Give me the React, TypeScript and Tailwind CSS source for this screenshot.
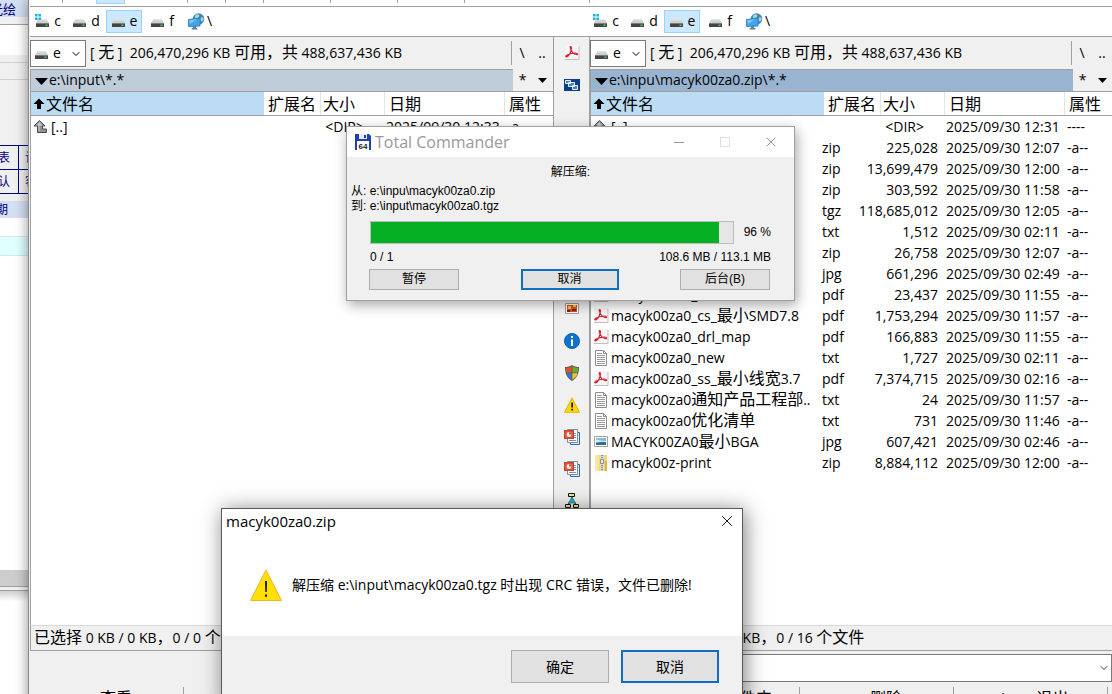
import { ReactNode } from "react";
import { ChevronDown, X } from "lucide-react";

type IconName =
  | "pdf" | "txt" | "jpg" | "zip" | "up" | "windows" | "picture"
  | "info" | "shield" | "warning" | "ppt" | "network";

interface FileRow {
  icon: IconName;
  name: string;
  ext: string;
  size: string;
  date: string;
  attr: string;
}

const INPUT_FILES: FileRow[] = [
  { icon: "up", name: "[..]", ext: "", size: "<DIR>", date: "2025/09/30 12:33", attr: "-a--" },
];

const ZIP_FILES: FileRow[] = [
  { icon: "up", name: "[..]", ext: "", size: "<DIR>", date: "2025/09/30 12:31", attr: "----" },
  { icon: "zip", name: "", ext: "zip", size: "225,028", date: "2025/09/30 12:07", attr: "-a--" },
  { icon: "zip", name: "", ext: "zip", size: "13,699,479", date: "2025/09/30 12:00", attr: "-a--" },
  { icon: "zip", name: "", ext: "zip", size: "303,592", date: "2025/09/30 11:58", attr: "-a--" },
  { icon: "zip", name: "", ext: "tgz", size: "118,685,012", date: "2025/09/30 12:05", attr: "-a--" },
  { icon: "txt", name: "", ext: "txt", size: "1,512", date: "2025/09/30 02:11", attr: "-a--" },
  { icon: "zip", name: "", ext: "zip", size: "26,758", date: "2025/09/30 12:07", attr: "-a--" },
  { icon: "jpg", name: "", ext: "jpg", size: "661,296", date: "2025/09/30 02:49", attr: "-a--" },
  { icon: "pdf", name: "macyk00za0_", ext: "pdf", size: "23,437", date: "2025/09/30 11:55", attr: "-a--" },
  { icon: "pdf", name: "macyk00za0_cs_最小SMD7.8", ext: "pdf", size: "1,753,294", date: "2025/09/30 11:57", attr: "-a--" },
  { icon: "pdf", name: "macyk00za0_drl_map", ext: "pdf", size: "166,883", date: "2025/09/30 11:55", attr: "-a--" },
  { icon: "txt", name: "macyk00za0_new", ext: "txt", size: "1,727", date: "2025/09/30 02:11", attr: "-a--" },
  { icon: "pdf", name: "macyk00za0_ss_最小线宽3.7", ext: "pdf", size: "7,374,715", date: "2025/09/30 02:16", attr: "-a--" },
  { icon: "txt", name: "macyk00za0通知产品工程部..", ext: "txt", size: "24", date: "2025/09/30 11:57", attr: "-a--" },
  { icon: "txt", name: "macyk00za0优化清单", ext: "txt", size: "731", date: "2025/09/30 11:46", attr: "-a--" },
  { icon: "jpg", name: "MACYK00ZA0最小BGA", ext: "jpg", size: "607,421", date: "2025/09/30 02:46", attr: "-a--" },
  { icon: "zip", name: "macyk00z-print", ext: "zip", size: "8,884,112", date: "2025/09/30 12:00", attr: "-a--" },
];

// null leaves an empty slot between two groups
const BUTTON_BAR: (IconName | null)[] = [
  "pdf", "windows", null, "zip", "jpg", "info", "txt", "zip",
  "picture", "info", "shield", "warning", "ppt", "ppt", "network",
];

const TOOLBAR_GROUPS = [
  "w-[33px]", "w-[125px]", "w-[38px]", "w-[38px]", "w-[67px]", "w-[67px]", "w-[67px]", "w-[125px]",
];

const FUNCTION_KEYS = [
  "F3 查看", "F4 编辑", "F5 复制", "F6 移动", "F7 新建文件夹", "F8 删除", "Alt+F4 退出",
];

// Chinese runs are set a step larger than the Latin text around them
function Mixed({ text }: { text: string }) {
  const parts = text.split(/([\u3000-\u9fff\uff00-\uffef]+)/);
  return (
    <>
      {parts.map((part, i) =>
        i % 2 ? <span key={i} className="text-[16px] leading-none">{part}</span> : part
      )}
    </>
  );
}

function DriveIcon({ system = false }: { system?: boolean }) {
  return (
    <svg width="15" height="14" viewBox="0 0 15 14" className="shrink-0">
      <path d="M3.500 5h8L14 9H1z" fill="#cfcfcf" />
      <path d="M3.500 5h8l.8 1.500H2.700z" fill="#e4e4e4" />
      <path d="M1 9h13v4H1z" fill="#454545" />
      <path d="M1 9h13v1H1z" fill="#7c7c7c" />
      <path d="M10.500 10.500h2v1.500h-2z" fill="#3fd65a" />
      {system && (
        <path d="M0 0h2.600v2.600H0zM3.400 0H6v2.600H3.400zM0 3.400h2.600V6H0zM3.400 3.400H6V6H3.400z" fill="#19b5e6" />
      )}
    </svg>
  );
}

function NetworkDriveIcon() {
  return (
    <svg width="17" height="17" viewBox="0 0 17 17" className="shrink-0">
      <circle cx="10.500" cy="6" r="5.800" fill="#4587a8" />
      <path d="M7 3c1-2 3-2 4-1s-.5 2-1 3-2 1-3 0zM12.500 5c1-1 2.500-1 3 0s-.5 3-1.500 3.500S12 6 12.500 5z" fill="#a4d3e6" />
      <path d="M.5 6.500L12 5v8L.5 13.500z" fill="#3fa6ec" stroke="#2b77ad" strokeWidth=".8" />
      <path d="M1.300 7.200L9 6.200 2 11z" fill="#7cc8f8" />
      <path d="M5 13.300l3-.2v1.700l1.500.7v1h-6v-1L5 15z" fill="#56829e" />
    </svg>
  );
}

function Icon({ name }: { name: IconName }) {
  switch (name) {
    case "pdf":
      return (
        <svg width="16" height="16" viewBox="0 0 16 16" className="shrink-0">
          <path d="M1 0h14v15H1z" fill="#f7f5f5" />
          <path d="M1 14.500h14V1" stroke="#c4bfbf" fill="none" />
          <path d="M6.600 1.500c1.400 0 .8 3.200-.4 6.200C5 10.500 3 12.300 1.900 11.800 1.200 10.800 4.500 9.100 7.500 8.500c3-.6 6-.3 6.200.6.100 1-3 .4-4.900-1.500C7 5.700 5.500 1.500 6.600 1.500z" fill="none" stroke="#d3222a" strokeWidth="1.200" />
        </svg>
      );
    case "txt":
      return (
        <svg width="16" height="16" viewBox="0 0 16 16" className="shrink-0">
          <path d="M2.500.5h8l3 3v12h-11z" fill="#fff" stroke="#8c8c8c" />
          <path d="M10.500.5v3h3" fill="none" stroke="#8c8c8c" />
          <path d="M4 3.500h5M4 5.500h8M4 7.500h8M4 9.500h8M4 11.500h8M4 13.500h8" stroke="#9a9a9a" />
        </svg>
      );
    case "jpg":
      return (
        <svg width="16" height="16" viewBox="0 0 16 16" className="shrink-0">
          <path d="M1.500 2.500h13v10h-13z" fill="#fff" stroke="#a0a0a0" />
          <path d="M3 4h10v7H3z" fill="#7fb9e0" />
          <path d="M3 8.500c3 1 4-1.500 10-1V11H3z" fill="#2f6e86" />
          <path d="M3 5.500c3 0 5 2 10 1.500v1H3z" fill="#d3ebf7" />
        </svg>
      );
    case "zip":
      return (
        <svg width="16" height="16" viewBox="0 0 16 16" className="shrink-0">
          <path d="M2 0h12v16H2z" fill="#f3d676" />
          <path d="M2 0h4v16H2z" fill="#fae79f" />
          <path d="M12 6h2v10h-2z" fill="#dfb443" />
          <path d="M7 0h4v15H7z" fill="#deddd2" />
          <path d="M9 0v15" stroke="#8a8a80" strokeWidth="2" strokeDasharray="1 1" />
          <path d="M7.500 4.500h3v4h-3z" fill="#eee" stroke="#8a8a8a" />
        </svg>
      );
    case "up":
      return (
        <svg width="16" height="16" viewBox="0 0 16 16" className="shrink-0">
          <path d="M6.500 1.500L12 7H9.500v3h4v3.500H4.500V7H1z" fill="#929292" stroke="#4c4c4c" />
          <path d="M6.500 3L9 6.500H6.500V12H5.500V6.500H3.500z" fill="#cacaca" />
        </svg>
      );
    case "windows":
      return (
        <svg width="16" height="16" viewBox="0 0 16 16" className="shrink-0">
          <path d="M0 2h16v12H0z" fill="#0b3f8c" />
          <path d="M1.500 3.500h5v3h-5zM4.500 5.500h6v4h-6zM8.500 8.500h5v4h-5z" fill="#4a80bd" stroke="#e6f1fb" />
        </svg>
      );
    case "picture":
      return (
        <svg width="16" height="16" viewBox="0 0 16 16" className="shrink-0">
          <path d="M1.500 2.500h13v10h-13z" fill="#fff" stroke="#a0a0a0" />
          <path d="M3 4h10v7H3z" fill="#d9531e" />
          <path d="M4 5h3v3H4zM9 4h3v2H9z" fill="#f9c440" />
          <path d="M3 9h3v2H3zM8 8h4v2H8z" fill="#8c1d10" />
        </svg>
      );
    case "info":
      return (
        <svg width="16" height="16" viewBox="0 0 16 16" className="shrink-0">
          <circle cx="8" cy="8" r="7.500" fill="#0b74d1" stroke="#0a5ca8" />
          <path d="M7 3h2v2H7zM7 6.500h2V13H7z" fill="#fff" />
        </svg>
      );
    case "shield":
      return (
        <svg width="16" height="16" viewBox="0 0 16 16" className="shrink-0">
          <path d="M8 0c2 1.500 4.500 2 7 2 0 7-2 11-7 14C3 13 1 9 1 2c2.500 0 5-.5 7-2z" fill="#5c5c52" />
          <path d="M7.600 1.500V7.500H2.300C2 6 2 4.500 2 3c2.200-.2 4-.6 5.600-1.500z" fill="#e0532a" />
          <path d="M8.400 1.500V7.500h5.300c.3-1.500.3-3 .3-4.500-2.200-.2-4-.6-5.600-1.500z" fill="#6bab2c" />
          <path d="M7.600 8.300V14.700C4.800 13 3.100 11 2.500 8.300z" fill="#2f76cf" />
          <path d="M8.400 8.300V14.700C11.200 13 12.900 11 13.500 8.300z" fill="#f7c22d" />
        </svg>
      );
    case "warning":
      return (
        <svg width="16" height="16" viewBox="0 0 16 16" className="shrink-0">
          <path d="M8 .8l7.500 14.500H.5z" fill="#ffd400" stroke="#e6b800" />
          <path d="M7.200 5.500h1.800v5H7.200zM7.200 11.700h1.800v1.800H7.200z" fill="#222" />
        </svg>
      );
    case "ppt":
      return (
        <svg width="16" height="16" viewBox="0 0 16 16" className="shrink-0">
          <path d="M6.500 3.500h9v12h-9z" fill="#dce6f6" stroke="#3f67ab" />
          <path d="M3.500.5h10v13h-10z" fill="#fff" stroke="#7390bd" />
          <path d="M5 11.500h7M10 4.500h2M10 6.500h2M10 8.500h2" stroke="#7390bd" />
          <path d="M0 1h10v9H0z" fill="#c9432b" />
          <path d="M1.500 2.500h7v6h-7z" fill="#e2684f" />
          <circle cx="5" cy="5.500" r="2.300" fill="#fff" />
          <path d="M5 5.500V3.200a2.300 2.300 0 0 1 2.300 2.300z" fill="#c9432b" />
        </svg>
      );
    case "network":
      return (
        <svg width="16" height="16" viewBox="0 0 16 16" className="shrink-0">
          <path d="M8 4v4L3 12M8 8l5 4" stroke="#111" fill="none" />
          <path d="M4.500.5h6v3h-6zM1.500 11.500h5v3h-5zM9.500 11.500h5v3h-5z" fill="#efe98b" stroke="#111" />
          <path d="M8 4l3.500 6h-7z" fill="#1fb8c4" stroke="#145f66" strokeWidth=".6" />
        </svg>
      );
  }
}

function DriveBar({ className }: { className: string }) {
  return (
    <div className={`flex h-[30px] items-center gap-0.5 border-b border-[#a0a0a0] bg-white pb-px ${className}`}>
      {["c", "d", "e", "f"].map((drive) => (
        <button
          key={drive}
          className={`flex h-[23px] w-9 items-center justify-center gap-1 border text-[14px] ${
            drive === "e" ? "border-[#99d1ff] bg-[#cce8ff]" : "border-transparent"
          }`}
        >
          <DriveIcon system={drive === "c"} />
          {drive}
        </button>
      ))}
      <button className="flex h-[23px] w-9 items-center justify-center gap-0.5 text-[14px]">
        <NetworkDriveIcon />
        <span>\</span>
      </button>
    </div>
  );
}

interface PanelProps {
  id: string;
  path: string;
  active?: boolean;
  files: FileRow[];
  status: string;
}

function Panel({ id, path, active, files, status }: PanelProps) {
  return (
    <section className="flex min-w-0 flex-col border-r border-[#a0a0a0]">
      <div className="flex h-8 items-center bg-[#f0f0f0]">
        <div className="relative">
          <label htmlFor={id} className="absolute left-1 top-1.5"><DriveIcon /></label>
          <select id={id} className="h-[27px] w-14 appearance-none border border-[#7a7a7a] bg-white pl-[22px] text-[14px]">
            <option>e</option>
          </select>
          <ChevronDown className="pointer-events-none absolute right-1 top-2 size-3" strokeWidth={2} />
        </div>
        <span className="flex-1 whitespace-pre pl-1">
          <Mixed text={"[ 无 ]  206,470,296 KB 可用，共 488,637,436 KB"} />
        </span>
        <div className="flex h-6 w-[42px] items-center border-l border-[#a0a0a0]">
          <button className="w-5">\</button>
          <button className="w-5">..</button>
        </div>
      </div>

      <div className="flex h-[22px] bg-[#f0f0f0]">
        <div className={`flex min-w-0 flex-1 items-start border-l border-t border-[#a0a0a0] pl-1 ${active ? "bg-[#99b4d1]" : "bg-[#bfcddb]"}`}>
          <svg width="13" height="7" viewBox="0 0 13 7" className="mr-px mt-2 shrink-0">
            <path d="M0 0h13L6.500 7z" />
          </svg>
          <span>{path}</span>
        </div>
        <div className="flex w-10 items-center justify-center gap-3">
          <button className="leading-none">*</button>
          <button aria-label="历史">
            <svg width="9" height="5" viewBox="0 0 9 5"><path d="M0 0h9L4.500 5z" /></svg>
          </button>
        </div>
      </div>

      <div className="flex h-[25px] border-y border-l border-[#a0a0a0] bg-white text-[16px]">
        <button className="flex min-w-0 flex-1 items-center gap-px bg-[#bcdcf4] pl-0.5">
          <svg width="12" height="12" viewBox="0 0 12 12">
            <path d="M6 .5l5.500 5.500H8v5H4V6H.5z" />
          </svg>
          文件名
        </button>
        <button className="w-[57px] border-r border-[#e5e5e5] text-center">扩展名</button>
        <button className="w-16 border-r border-[#e5e5e5] pl-0.5 text-left">大小</button>
        <button className="w-[120px] border-r border-[#e5e5e5] pl-1 text-left">日期</button>
        <button className="w-12 pl-1 text-left">属性</button>
      </div>

      <div className="min-h-0 flex-1 overflow-hidden border-l border-[#a0a0a0] bg-white">
        <table className="w-full table-fixed border-collapse">
          <colgroup>
            <col />
            <col className="w-8" />
            <col className="w-[85px]" />
            <col className="w-[127px]" />
            <col className="w-12" />
          </colgroup>
          <tbody>
            {files.map((file, i) => (
              <tr key={i} className="h-[21px]">
                <td className="p-0">
                  <div className="flex h-[21px] items-center gap-0.5 whitespace-nowrap pl-0.5">
                    <Icon name={file.icon} />
                    <span><Mixed text={file.name} /></span>
                  </div>
                </td>
                <td className="p-0 pl-px">{file.ext}</td>
                <td className={`p-0 text-right ${file.size === "<DIR>" ? "pr-3.5" : ""}`}>{file.size}</td>
                <td className="whitespace-nowrap p-0 pl-2">{file.date}</td>
                <td className="p-0 pl-0.5">{file.attr}</td>
              </tr>
            ))}
          </tbody>
        </table>
      </div>

      <div className="flex h-[26px] shrink-0 items-center overflow-hidden whitespace-nowrap border-y border-l border-b-[#a0a0a0] border-l-[#a0a0a0] border-t-[#d9d9d9] bg-[#f0f0f0] pl-[3px]">
        <span><Mixed text={status} /></span>
      </div>
    </section>
  );
}

// Slice of the order application that shows to the left of the file manager
function BackgroundWindow() {
  return (
    <aside className="flex w-7 shrink-0 flex-col overflow-hidden bg-[#f0f0f0] text-[12px] text-[#000080]">
      <div className="flex h-[17px] items-center justify-end bg-[#d3dff2] pr-3 text-[13px]">
        <span className="whitespace-nowrap">光绘</span>
      </div>
      <div className="h-2 border-b border-[#a0a0a0] bg-[#f0f0f0]" />
      <div className="h-[30px] bg-white" />
      <div className="h-2 border-b border-[#d0d0d0]" />
      <div className="h-[17px] border-b border-[#d0d0d0]" />
      <div className="h-[65px]" />
      {[["表", "计"], ["认", "客"]].map(([a, b]) => (
        <div key={a} className="flex h-6 items-center border-t border-[#000080]">
          <div className="flex h-full w-[19px] items-center justify-end border-r border-[#000080] pr-2"><span>{a}</span></div>
          <span className="pl-1.5">{b}</span>
        </div>
      ))}
      <div className="h-2 border-t border-[#000080]" />
      <div className="flex h-[17px] items-center justify-start bg-[#d3dff2]"><span className="-ml-1">期</span></div>
      <div className="h-[18px] bg-white" />
      <div className="h-5 border-y border-[#d0e8e8] bg-[#e0ffff]" />
      <div className="h-[314px] bg-white" />
      <div className="h-4 bg-[#cdcdcd]" />
      <div className="h-[5px] border-y border-[#a0a0a0]" />
      <div className="flex-1 bg-gradient-to-b from-[#cfcfcf] via-white via-10% to-white" />
    </aside>
  );
}

function DialogButton({ children, primary, className }: { children: ReactNode; primary?: boolean; className: string }) {
  return (
    <button
      className={`bg-[#e1e1e1] ${primary ? "border-2 border-[#0f6fbf]" : "border border-[#adadad]"} ${className}`}
    >
      {children}
    </button>
  );
}

function ProgressDialog() {
  const percent = 96;
  return (
    <div
      role="dialog"
      aria-label="Total Commander"
      className="absolute left-[346px] top-[126px] w-[449px] border border-[#a0a0a0] bg-[#f0f0f0] font-['Liberation_Sans','Noto_Sans_CJK_SC',sans-serif] text-[12px] leading-[15px] shadow-[2px_4px_12px_rgba(0,0,0,0.35)]"
    >
      <div className="flex h-[30px] items-center bg-white pl-2 text-[#999]">
        <svg width="16" height="16" viewBox="0 0 16 16" className="mr-1">
          <path d="M0 0h14l2 2v14H0z" fill="#1f3fb5" />
          <path d="M4 0h8v5H4z" fill="#e4ecfa" />
          <path d="M9 1h2v3H9z" fill="#1f3fb5" />
          <path d="M2 7h12v9H2z" fill="#fff" />
          <text x="8" y="14.500" fontSize="8" fontWeight="bold" textAnchor="middle" fill="#222">64</text>
        </svg>
        <span className="flex-1 font-['Open_Sans',sans-serif] text-[16px]">Total Commander</span>
        <button aria-label="最小化" className="flex w-[46px] justify-center"><span className="h-px w-2.5 bg-[#999]" /></button>
        <button aria-label="最大化" className="flex w-[46px] justify-center"><span className="size-2.5 border border-[#e0e0e0]" /></button>
        <button aria-label="关闭" className="flex w-[46px] justify-center"><X className="size-4" strokeWidth={1.5} /></button>
      </div>
      <div className="px-1 pb-2.5 pt-2">
        <p className="text-center">解压缩:</p>
        <p className="mt-1">从: e:\inpu\macyk00za0.zip</p>
        <p>到: e:\input\macyk00za0.tgz</p>
        <div className="mt-[7px] flex items-center pl-[19px] pr-[19px]">
          <div role="progressbar" aria-valuenow={percent} className="h-[23px] flex-1 border border-[#bcbcbc] bg-[#e6e6e6]">
            <div className="h-full bg-[#06b025]" style={{ width: `${percent}%` }} />
          </div>
          <span className="w-[37px] text-right">{percent} %</span>
        </div>
        <div className="mt-1.5 flex justify-between pl-[19px] pr-[19px]">
          <span>0 / 1</span>
          <span>108.6 MB / 113.1 MB</span>
        </div>
        <div className="mt-1 flex justify-between pl-[18px] pr-5">
          <DialogButton className="h-[21px] w-[90px]">暂停</DialogButton>
          <DialogButton className="h-[21px] w-[98px]" primary>取消</DialogButton>
          <DialogButton className="h-[21px] w-[90px]">后台(B)</DialogButton>
        </div>
      </div>
    </div>
  );
}

function ErrorDialog() {
  return (
    <div
      role="alertdialog"
      aria-label="macyk00za0.zip"
      className="absolute left-[221px] top-[508px] w-[522px] border border-[#5a5a5a] bg-white shadow-[2px_2px_20px_rgba(0,0,0,0.5)]"
    >
      <div className="flex h-6 items-center justify-between pl-1 pr-1.5">
        <span className="text-[15px]">macyk00za0.zip</span>
        <button aria-label="关闭"><X className="size-[18px]" strokeWidth={1.2} /></button>
      </div>
      <div className="flex h-[103px] items-center gap-2.5 pl-7">
        <svg width="32" height="32" viewBox="0 0 32 32">
          <path d="M16 1L31.500 31.500H.5z" fill="#ffe000" stroke="#f0b429" />
          <path d="M15 12h2l-.3 11h-1.400zM15 25.500h2v2.200h-2z" fill="#111" />
        </svg>
        <p className="text-[14px]">解压缩 e:\input\macyk00za0.tgz 时出现 CRC 错误，文件已删除!</p>
      </div>
      <div className="flex h-[70px] items-start justify-end gap-3 bg-[#f0f0f0] pr-[23px] pt-3.5">
        <DialogButton className="h-[33px] w-[98px] text-[14px]">确定</DialogButton>
        <DialogButton className="h-[33px] w-[98px] text-[14px]" primary>取消</DialogButton>
      </div>
    </div>
  );
}

export default function App() {
  return (
    <div className="relative flex h-screen overflow-hidden bg-white font-['Open_Sans','Noto_Sans_CJK_SC',sans-serif] text-[14px] leading-[20px] text-black">
      <BackgroundWindow />

      <main className="-mr-0.5 flex h-[calc(100%+15px)] min-w-0 flex-1 flex-col border-l border-[#8a8a8a] bg-[#f0f0f0] pl-px shadow-[0_0_12px_rgba(0,0,0,0.45)]">
        <div className="flex h-[7px] shrink-0 border-b border-[#a0a0a0] bg-white pb-[3px]">
          {TOOLBAR_GROUPS.map((width, i) => (
            <div key={i} className={`border-r border-[#a0a0a0] ${width}`}>
              {i === 1 && <button aria-label="视图" className="ml-[33px] block h-1 w-[29px] border border-t-0 border-[#99d1ff] bg-[#cce8ff]" />}
            </div>
          ))}
        </div>

        <div className="grid shrink-0 grid-cols-[1fr_36px_1fr]">
          <DriveBar className="col-span-2" />
          <DriveBar className="-ml-0.5" />
        </div>

        <div className="grid min-h-0 flex-1 grid-cols-[1fr_36px_1fr] grid-rows-[minmax(0,1fr)]">
          <Panel id="drive-left" path="e:\input\*.*" files={INPUT_FILES} status="已选择 0 KB / 0 KB，0 / 0 个文件" />
          <nav className="flex flex-col items-center border-r border-[#a0a0a0]">
            {BUTTON_BAR.map((name, i) =>
              name ? (
                <button key={i} aria-label={name} className="flex h-8 w-8 items-center justify-center">
                  <Icon name={name} />
                </button>
              ) : (
                <div key={i} className="h-8" />
              )
            )}
          </nav>
          <Panel id="drive-right" path="e:\inpu\macyk00za0.zip\*.*" active files={ZIP_FILES} status="已选择 0 KB / 148,843 KB，0 / 16 个文件" />
        </div>

        <div className="flex h-[34px] shrink-0 items-start justify-end pr-0.5 pt-[3px]">
          <div className="relative w-3/4">
            <select aria-label="命令行" className="h-7 w-full appearance-none border border-[#7a7a7a] bg-white px-2" />
            <ChevronDown className="pointer-events-none absolute right-0.5 top-2 size-3" strokeWidth={1.5} />
          </div>
        </div>

        <div className="flex h-6 shrink-0 pr-1.5 pt-0.5">
          {FUNCTION_KEYS.map((label) => (
            <button key={label} className="flex-1 border-r border-[#a0a0a0] pb-px leading-none">
              <Mixed text={label} />
            </button>
          ))}
        </div>
      </main>

      <ProgressDialog />
      <ErrorDialog />
    </div>
  );
}
